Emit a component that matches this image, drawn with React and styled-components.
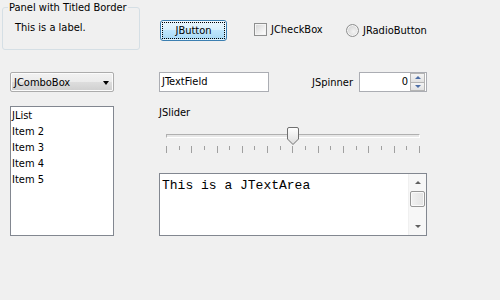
import React from "react";
import styled, { createGlobalStyle } from "styled-components";

const GlobalStyle = createGlobalStyle`
  body {
    margin: 0;
    background: #f0f0f0;
    font-family: "DejaVu Sans Condensed", "Liberation Sans", sans-serif;
    font-size: 11px;
    color: #000;
  }
`;

const Page = styled.div`
  width: 500px;
  height: 300px;
  background: #f0f0f0;
  overflow: hidden;
`;

const TopRow = styled.div`
  display: flex;
  align-items: flex-start;
  height: 72px;
  padding-left: 2px;
  box-sizing: border-box;
`;

const Panel = styled.fieldset`
  margin: 1px 0 0 0;
  padding: 7px 0 0 12px;
  width: 138px;
  height: 49px;
  box-sizing: border-box;
  border: 1px solid #d5dfe5;
  border-radius: 3px;
  min-inline-size: 0;
`;

const PanelTitle = styled.legend`
  padding: 0 1px;
  margin-left: -7px;
  line-height: 13px;
`;

const Label = styled.span`
  line-height: 13px;
`;

const Button = styled.button`
  position: relative;
  margin: 20px 0 0 20px;
  width: 67px;
  height: 21px;
  padding: 0;
  border: 1px solid #3c7fb1;
  border-radius: 3px;
  background: linear-gradient(
    to bottom,
    #eaf6fd 0%,
    #d9f0fc 45%,
    #bee6fd 50%,
    #a7d9f5 100%
  );
  box-shadow: inset 0 0 0 1px rgba(255, 255, 255, 0.6);
  font: inherit;
  color: #000;
  &::after {
    content: "";
    position: absolute;
    inset: 1px;
    border: 1px dotted #000;
  }
`;

const Choice = styled.label`
  display: flex;
  align-items: center;
  gap: 4px;
  width: ${(p) => p.$width}px;
  margin: ${(p) => p.$top}px 0 0 ${(p) => p.$left}px;
  line-height: 13px;
`;

const CheckBox = styled.span`
  width: 13px;
  height: 13px;
  box-sizing: border-box;
  border: 1px solid #8e8f8f;
  background: linear-gradient(135deg, #d4d4d4 0%, #f4f4f4 70%, #fff 100%);
  box-shadow: inset 0 0 0 1px #f4f4f4;
`;

const Radio = styled.span`
  width: 13px;
  height: 13px;
  box-sizing: border-box;
  border: 1px solid #8e8f8f;
  border-radius: 50%;
  background: radial-gradient(circle at 60% 60%, #f4f4f4 0%, #d6d6d6 70%, #c8c8c8 100%);
  box-shadow: inset 0 0 0 1px #f6f6f6;
`;

const Grid = styled.div`
  display: grid;
  grid-template-columns: 104px 268px;
  column-gap: 45px;
  row-gap: 14px;
  padding-left: 10px;
`;

const Combo = styled.div`
  display: flex;
  align-items: center;
  justify-content: space-between;
  height: 20px;
  box-sizing: border-box;
  padding: 0 4px 0 3px;
  border: 1px solid #acacac;
  border-radius: 2px;
  background: linear-gradient(to bottom, #f2f2f2 0%, #ebebeb 50%, #dddddd 51%, #cfcfcf 100%);
  box-shadow: inset 0 0 0 1px #fbfbfb;
`;

const ComboArrow = styled.span`
  width: 0;
  height: 0;
  border-left: 3.5px solid transparent;
  border-right: 3.5px solid transparent;
  border-top: 4px solid #000;
  margin-top: 1px;
`;

const FieldRow = styled.div`
  display: flex;
  align-items: center;
`;

const TextField = styled.div`
  width: 110px;
  height: 20px;
  box-sizing: border-box;
  border: 1px solid #abadb3;
  background: #fff;
  padding-left: 2px;
  line-height: 18px;
`;

const SpinnerLabel = styled.span`
  margin-left: auto;
  margin-right: 6px;
`;

const Spinner = styled.div`
  display: flex;
  width: 68px;
  height: 20px;
  box-sizing: border-box;
  border: 1px solid #abadb3;
  background: #fff;
`;

const SpinnerValue = styled.span`
  flex: 1;
  text-align: right;
  padding-right: 2px;
  line-height: 18px;
`;

const SpinnerButtons = styled.div`
  display: flex;
  flex-direction: column;
  width: 15px;
  margin-right: 1px;
`;

const SpinButton = styled.div`
  flex: 1;
  display: flex;
  align-items: center;
  justify-content: center;
  box-sizing: border-box;
  border: 1px solid #b4b4b4;
  border-top-width: ${(p) => (p.$down ? 0 : 1)}px;
  background: linear-gradient(to bottom, #f4f4f4, #e2e2e2);
`;

const Triangle = styled.span`
  width: 0;
  height: 0;
  border-left: ${(p) => p.$size}px solid transparent;
  border-right: ${(p) => p.$size}px solid transparent;
  ${(p) => (p.$down ? "border-top" : "border-bottom")}: ${(p) => p.$size}px solid
    ${(p) => p.$color};
`;

const List = styled.div`
  height: 130px;
  box-sizing: border-box;
  border: 1px solid #828790;
  background: #fff;
  padding: 1px 0 0 1px;
`;

const ListItem = styled.div`
  line-height: 16px;
`;

const RightColumn = styled.div`
  display: flex;
  flex-direction: column;
`;

const SliderLabel = styled.div`
  line-height: 13px;
`;

const Slider = styled.div`
  padding: 15px 7px 0 7px;
`;

const Track = styled.div`
  position: relative;
  height: 4px;
  box-sizing: border-box;
  border: 1px solid;
  border-color: #b0b0b0 #fff #fff #b0b0b0;
  background: #e7e7e7;
`;

const Thumb = styled.svg`
  position: absolute;
  top: -8px;
  left: calc(50% - 6px);
`;

const Ticks = styled.div`
  display: flex;
  justify-content: space-between;
  align-items: flex-start;
  margin-top: 8px;
`;

const Tick = styled.span`
  width: 1px;
  height: ${(p) => (p.$major ? 7 : 4)}px;
  background: #a0a0a0;
`;

const TextArea = styled.div`
  display: flex;
  margin-top: 20px;
  height: 63px;
  box-sizing: border-box;
  border: 1px solid #828790;
  background: #fff;
`;

const AreaText = styled.div`
  flex: 1;
  padding: 4px 0 0 2px;
  font-family: "Liberation Mono", "Courier New", monospace;
  font-size: 13px;
  line-height: 15px;
`;

const ScrollBar = styled.div`
  display: flex;
  flex-direction: column;
  width: 17px;
  background: #f7f7f7;
  border-left: 1px solid #f0f0f0;
`;

const ScrollArrow = styled.div`
  height: 17px;
  display: flex;
  align-items: center;
  justify-content: center;
`;

const ScrollThumb = styled.div`
  height: 16px;
  margin: 0 1px;
  box-sizing: border-box;
  border: 1px solid #979797;
  border-radius: 2px;
  background: linear-gradient(to right, #f2f2f2, #e3e3e3);
  box-shadow: inset 0 0 0 1px #fafafa;
`;

const ScrollFill = styled.div`
  flex: 1;
`;

const ticks = Array.from({ length: 21 }, (_, i) => i);

function App() {
  return (
    <Page>
      <GlobalStyle />
      <TopRow>
        <Panel>
          <PanelTitle>Panel with Titled Border</PanelTitle>
          <Label>This is a label.</Label>
        </Panel>
        <Button>JButton</Button>
        <Choice $left={27} $top={23} $width={92}>
          <CheckBox />
          JCheckBox
        </Choice>
        <Choice $left={0} $top={24} $width={100}>
          <Radio />
          JRadioButton
        </Choice>
      </TopRow>
      <Grid>
        <Combo>
          JComboBox
          <ComboArrow />
        </Combo>
        <FieldRow>
          <TextField>JTextField</TextField>
          <SpinnerLabel>JSpinner</SpinnerLabel>
          <Spinner>
            <SpinnerValue>0</SpinnerValue>
            <SpinnerButtons>
              <SpinButton>
                <Triangle $size={3} $color="#4d6ea6" />
              </SpinButton>
              <SpinButton $down>
                <Triangle $size={3} $color="#4d6ea6" $down />
              </SpinButton>
            </SpinnerButtons>
          </Spinner>
        </FieldRow>
        <List>
          <ListItem>JList</ListItem>
          <ListItem>Item 2</ListItem>
          <ListItem>Item 3</ListItem>
          <ListItem>Item 4</ListItem>
          <ListItem>Item 5</ListItem>
        </List>
        <RightColumn>
          <SliderLabel>JSlider</SliderLabel>
          <Slider>
            <Track>
              <Thumb width="12" height="18" viewBox="0 0 12 18">
                <defs>
                  <linearGradient id="thumbFill" x1="0" y1="0" x2="0" y2="1">
                    <stop offset="0" stopColor="#ffffff" />
                    <stop offset="1" stopColor="#dcdcdc" />
                  </linearGradient>
                </defs>
                <path
                  d="M2 0.5 H10 Q11.5 0.5 11.5 2 V12 L6 17.5 L0.5 12 V2 Q0.5 0.5 2 0.5 Z"
                  fill="url(#thumbFill)"
                  stroke="#707070"
                />
              </Thumb>
            </Track>
            <Ticks>
              {ticks.map((i) => (
                <Tick key={i} $major={i % 2 === 0} />
              ))}
            </Ticks>
          </Slider>
          <TextArea>
            <AreaText>This is a JTextArea</AreaText>
            <ScrollBar>
              <ScrollArrow>
                <Triangle $size={3} $color="#606060" />
              </ScrollArrow>
              <ScrollThumb />
              <ScrollFill />
              <ScrollArrow>
                <Triangle $size={3} $color="#606060" $down />
              </ScrollArrow>
            </ScrollBar>
          </TextArea>
        </RightColumn>
      </Grid>
    </Page>
  );
}

export default App;
